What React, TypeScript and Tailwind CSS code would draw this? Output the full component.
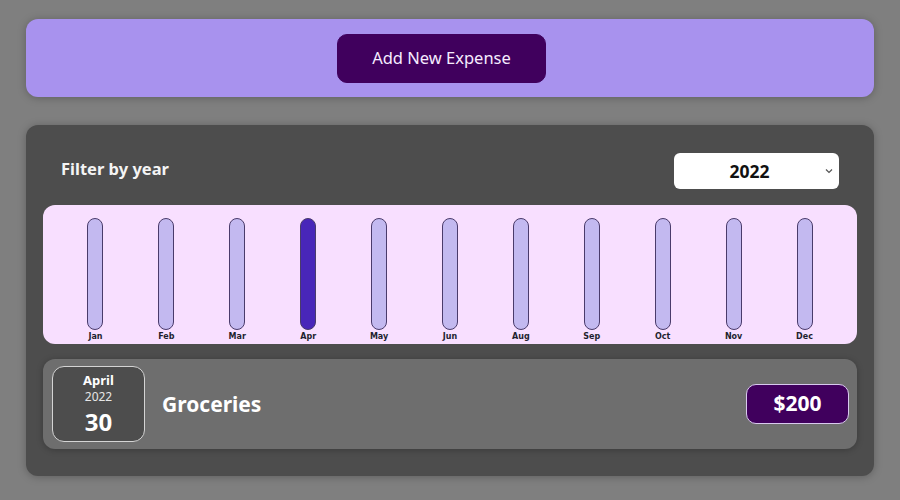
const months = [
  { label: "Jan", active: false },
  { label: "Feb", active: false },
  { label: "Mar", active: false },
  { label: "Apr", active: true },
  { label: "May", active: false },
  { label: "Jun", active: false },
  { label: "Aug", active: false },
  { label: "Sep", active: false },
  { label: "Oct", active: false },
  { label: "Nov", active: false },
  { label: "Dec", active: false },
];

const ChartBar = ({ label, active }: { label: string; active: boolean }) => {
  return (
    <div className="flex flex-1 flex-col items-center">
      <div
        className={
          "h-[112px] w-[16px] rounded-full border border-[#4a3b6b] " +
          (active ? "bg-[#4826b9]" : "bg-[#c3b9f0]")
        }
      ></div>
      <div className="mt-[1px] font-['DejaVu_Sans',sans-serif] text-[8px] font-bold leading-[12px] text-[#1f1f2f]">
        {label}
      </div>
    </div>
  );
};

const App = () => {
  return (
    <div className="min-h-[500px] bg-[#7f7f7f] px-[26px] pt-[19px] font-['Noto_Sans',sans-serif]">
      <div className="flex h-[78px] items-center justify-center rounded-[12px] bg-[#a892ee] shadow-[0_1px_8px_rgba(0,0,0,0.25)]">
        <button className="mr-[17px] h-[49px] w-[209px] rounded-[10px] border border-[#40005d] bg-[#40005d] text-[16.5px] text-[#f6ecff]">
          Add New Expense
        </button>
      </div>

      <div className="mt-[28px] h-[351px] rounded-[12px] bg-[#4d4d4d] px-[17px] pt-[28px] shadow-[0_1px_8px_rgba(0,0,0,0.25)]">
        <div className="flex items-center justify-between px-[18px]">
          <span className="-mt-[4px] text-[16.5px] font-bold text-[#f4f4f4]">
            Filter by year
          </span>
          <div className="relative h-[36px] w-[165px]">
            <select className="h-full w-full appearance-none rounded-[6px] bg-white pr-[14px] text-center text-[17.5px] font-bold text-[#111] outline-none">
              <option>2022</option>
              <option>2021</option>
              <option>2020</option>
            </select>
            <svg
              className="pointer-events-none absolute right-[5px] top-[14px]"
              width="10"
              height="8"
              viewBox="0 0 10 8"
              fill="none"
              stroke="#555"
              strokeWidth="1.2"
            >
              <path d="M2 2.5 L5 5.5 L8 2.5" />
            </svg>
          </div>
        </div>

        <div className="mt-[16px] flex h-[139px] rounded-[12px] bg-[#f8dfff] px-[17px] pt-[13px]">
          {months.map((m) => (
            <ChartBar key={m.label} label={m.label} active={m.active} />
          ))}
        </div>

        <div className="mt-[15px] flex h-[90px] items-center rounded-[12px] bg-[#6e6e6e] pl-[9px] pr-[8px] shadow-[0_1px_6px_rgba(0,0,0,0.25)]">
          <div className="flex h-[76px] w-[93px] flex-col items-center justify-center rounded-[12px] border border-[#d4d4d4] bg-[#4d4d4d] text-white">
            <div className="text-[13px] font-bold leading-[18px]">April</div>
            <div className="text-[12px] leading-[16px] text-[#e6e6e6]">2022</div>
            <div className="text-[24px] font-bold leading-[33px]">30</div>
          </div>
          <h2 className="ml-[17px] mt-[2px] flex-1 text-[21px] font-bold text-white">
            Groceries
          </h2>
          <div className="flex h-[40px] w-[103px] items-center justify-center rounded-[10px] border border-[#d9c9ef] bg-[#40005d] text-[21px] font-bold text-white">
            $200
          </div>
        </div>
      </div>
    </div>
  );
};

export default App;
